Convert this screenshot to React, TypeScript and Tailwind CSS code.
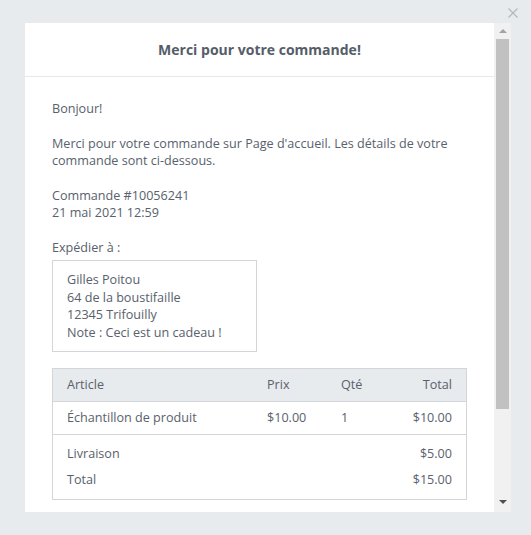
export default function App() {
  return (
    <div
      className="relative h-[535px] w-[531px] overflow-hidden bg-[#e8ebee] text-[#58616c]"
      style={{ fontFamily: '"Open Sans", sans-serif' }}
    >
      {/* close button */}
      <svg className="absolute left-[507px] top-[7px] h-[12px] w-[12px]" viewBox="0 0 12 12">
        <path d="M1.5 1.5 L10.5 10.5 M10.5 1.5 L1.5 10.5" stroke="#b4b8bc" strokeWidth="1.2" fill="none" />
      </svg>

      <div className="ml-[25px] mt-[23px] flex h-[489px] w-[486px]">
        {/* modal content */}
        <div className="h-full w-[469px] overflow-hidden bg-white">
          <div className="flex h-[54px] items-center justify-center border-b border-[#e6e8ea]">
            <h1 className="text-[14px] font-bold text-[#555d68]">Merci pour votre commande!</h1>
          </div>

          <div className="px-[27px] pt-[23px] text-[12.6px] leading-[17.5px]">
            <p>Bonjour!</p>
            <p className="mt-[17px]">
              Merci pour votre commande sur Page d'accueil. Les détails de votre commande sont ci-dessous.
            </p>
            <p className="mt-[17px]">
              Commande #10056241
              <br />
              21 mai 2021 12:59
            </p>
            <p className="mt-[17px]">Expédier à :</p>

            <div className="mt-[4px] w-[205px] border border-[#d3d5d8] px-[14px] pb-[10px] pt-[10px]">
              <p>Gilles Poitou</p>
              <p>64 de la boustifaille</p>
              <p>12345 Trifouilly</p>
              <p>Note : Ceci est un cadeau !</p>
            </div>

            <div className="mt-[16px] w-[415px] border border-[#d3d5d8]">
              <div className="flex h-[33px] items-center border-b border-[#d3d5d8] bg-[#e8ebee] px-[14px]">
                <span className="w-[200px]">Article</span>
                <span className="w-[74px]">Prix</span>
                <span className="w-[40px]">Qté</span>
                <span className="flex-1 text-right">Total</span>
              </div>
              <div className="flex h-[33px] items-center border-b border-[#d3d5d8] px-[14px]">
                <span className="w-[200px]">Échantillon de produit</span>
                <span className="w-[74px]">$10.00</span>
                <span className="w-[40px]">1</span>
                <span className="flex-1 text-right">$10.00</span>
              </div>
              <div className="px-[14px] pb-[10px] pt-[10px]">
                <div className="flex h-[18px] items-center justify-between">
                  <span>Livraison</span>
                  <span>$5.00</span>
                </div>
                <div className="mt-[8px] flex h-[18px] items-center justify-between">
                  <span>Total</span>
                  <span>$15.00</span>
                </div>
              </div>
            </div>
          </div>
        </div>

        {/* scrollbar */}
        <div className="flex h-full w-[17px] flex-col items-center bg-[#f1f1f1]">
          <svg className="mt-[6px] h-[4px] w-[8px]" viewBox="0 0 8 4">
            <path d="M0 4 L4 0 L8 4 Z" fill="#a3a3a3" />
          </svg>
          <div className="mt-[6px] h-[370px] w-[13px] bg-[#c1c1c1]" />
          <div className="flex-1" />
          <svg className="mb-[8px] h-[4px] w-[8px]" viewBox="0 0 8 4">
            <path d="M0 0 L8 0 L4 4 Z" fill="#505050" />
          </svg>
        </div>
      </div>
    </div>
  );
}
